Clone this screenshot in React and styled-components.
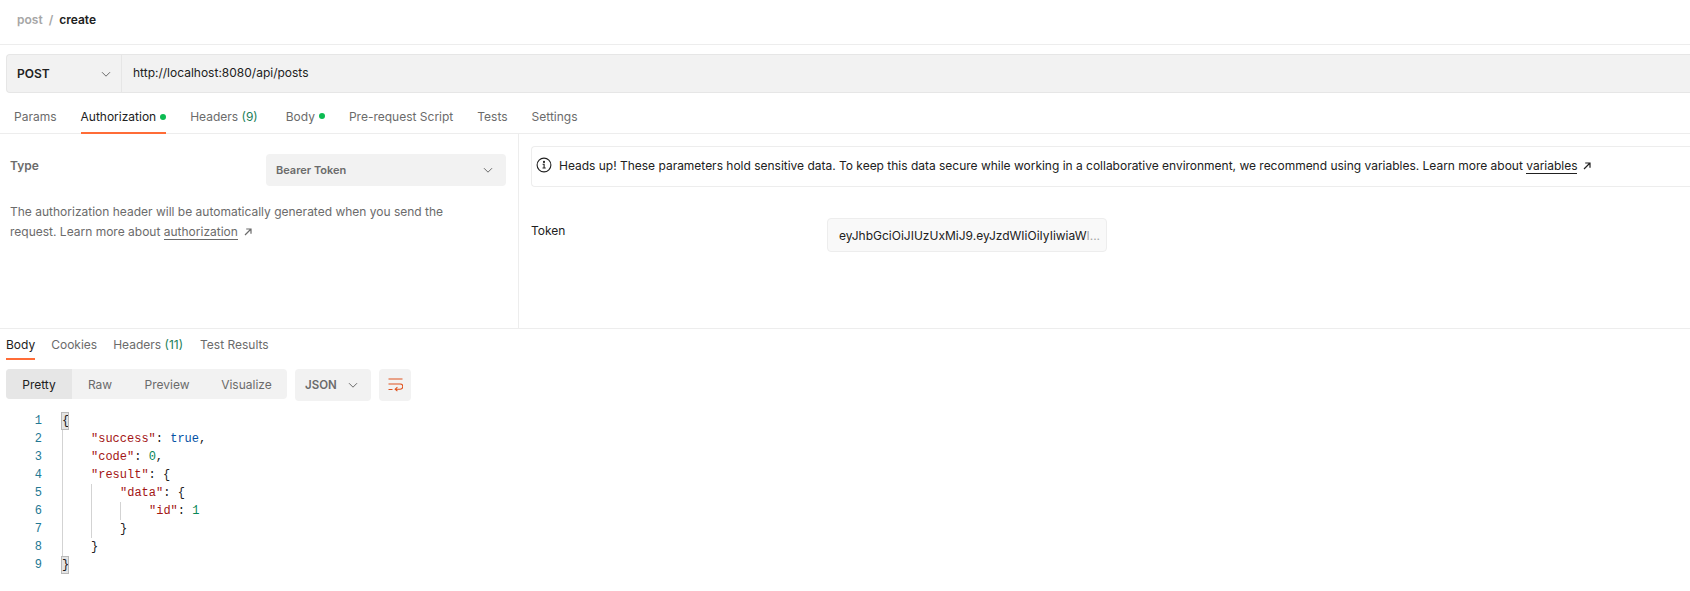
import React from 'react';
import styled, { createGlobalStyle } from 'styled-components';

const Global = createGlobalStyle`
  html, body { margin: 0; padding: 0; background: #fff; overflow: hidden; }
  body { font-family: Inter, "Noto Sans", sans-serif; font-size: 12px; color: #212121; }
`;

const Page = styled.div`
  width: 1690px;
  height: 591px;
  display: flex;
  flex-direction: column;
  overflow: hidden;
`;

const Breadcrumb = styled.header`
  height: 45px;
  box-sizing: border-box;
  border-bottom: 1px solid #ededed;
  display: flex;
  align-items: flex-start;
  padding: 13px 0 0 17px;
  gap: 6px;
  font-size: 12px;
  font-weight: 600;
  line-height: 14px;
`;
const Crumb = styled.span`
  color: ${p => (p.$muted ? '#a6a6a6' : '#212121')};
`;

const UrlBar = styled.div`
  margin: 9px 0 0 6px;
  height: 39px;
  box-sizing: border-box;
  display: flex;
  background: #f2f2f2;
  border: 1px solid #e6e6e6;
  border-right: 0;
  border-radius: 4px 0 0 4px;
`;
const Method = styled.div`
  width: 115px;
  box-sizing: border-box;
  border-right: 1px solid #e6e6e6;
  display: flex;
  align-items: center;
  justify-content: space-between;
  padding: 0 9px 0 10px;
  font-size: 12px;
  font-weight: 600;
`;
const UrlText = styled.div`
  padding: 0 0 2px 11px;
  display: flex;
  align-items: center;
  font-size: 12px;
  color: #212121;
`;

const Tabs = styled.nav`
  display: flex;
  align-items: stretch;
  gap: ${p => p.$gap || 24}px;
  height: ${p => p.$height || 41}px;
  box-sizing: border-box;
  padding-left: ${p => p.$pad || 14}px;
  border-bottom: ${p => (p.$line ? '1px solid #ededed' : '0')};
`;
const Tab = styled.div`
  display: flex;
  align-items: center;
  gap: 4px;
  box-sizing: border-box;
  font-size: 12px;
  white-space: nowrap;
  color: ${p => (p.$active ? '#212121' : '#6b6b6b')};
  border-bottom: 2px solid ${p => (p.$active ? '#ff6c37' : 'transparent')};
  margin-bottom: ${p => (p.$flush ? '-1px' : '0')};
  margin-right: ${p => p.$after || 0}px;
  padding-top: ${p => p.$top || 0}px;
`;
const Dot = styled.i`
  width: 6px;
  height: 6px;
  border-radius: 50%;
  background: #0cbb52;
`;
const Count = styled.span`
  color: #1c7f5a;
`;

const AuthPane = styled.section`
  height: 195px;
  box-sizing: border-box;
  display: flex;
  border-bottom: 1px solid #ededed;
`;
const LeftPane = styled.div`
  width: 519px;
  box-sizing: border-box;
  border-right: 1px solid #ededed;
  padding: 0 12px 0 10px;
`;
const TypeRow = styled.div`
  display: flex;
  justify-content: space-between;
  align-items: flex-start;
  margin-top: 20px;
`;
const TypeLabel = styled.div`
  font-size: 12px;
  font-weight: 600;
  color: #6b6b6b;
  padding-top: 4px;
`;
const Select = styled.div`
  width: 240px;
  height: 32px;
  box-sizing: border-box;
  background: #f2f2f2;
  border-radius: 4px;
  display: flex;
  align-items: center;
  justify-content: space-between;
  padding: 0 12px 0 10px;
  font-size: 11px;
  font-weight: 600;
  color: #6b6b6b;
`;
const Help = styled.p`
  margin: 16px 0 0;
  font-size: 12px;
  line-height: 20px;
  color: #6b6b6b;
`;
const LinkText = styled.span`
  color: ${p => (p.$dark ? '#212121' : '#6b6b6b')};
  border-bottom: 1px solid currentColor;
`;
const Arrow = styled.svg`
  width: 10px;
  height: 10px;
  margin-left: 5px;
  vertical-align: -1px;
`;

const RightPane = styled.div`
  flex: 1;
  padding: 12px 0 0 12px;
`;
const Notice = styled.div`
  height: 41px;
  box-sizing: border-box;
  border: 1px solid #ededed;
  border-right: 0;
  border-radius: 4px 0 0 4px;
  display: flex;
  align-items: center;
  gap: 7px;
  padding: 0 0 3px 4px;
  font-size: 12px;
  letter-spacing: -0.012px;
  white-space: nowrap;
  color: #212121;
`;
const TokenRow = styled.div`
  display: flex;
  align-items: flex-start;
  margin-top: 31px;
`;
const TokenLabel = styled.div`
  width: 296px;
  font-size: 12px;
  color: #212121;
  padding-top: 5px;
`;
const TokenInput = styled.div`
  width: 280px;
  height: 34px;
  box-sizing: border-box;
  background: #f9f9f9;
  border: 1px solid #ededed;
  border-radius: 4px;
  display: flex;
  align-items: center;
  padding: 0 11px;
  font-size: 12px;
  color: #212121;
  white-space: nowrap;
`;
const Fade = styled.span`
  color: #a6a6a6;
`;

const Toolbar = styled.div`
  display: flex;
  align-items: flex-start;
  gap: 8px;
  margin: 9px 0 0 6px;
`;
const Segmented = styled.div`
  display: flex;
  height: 30px;
  background: #f2f2f2;
  border-radius: 4px;
  overflow: hidden;
`;
const Segment = styled.div`
  width: ${p => p.$w}px;
  display: flex;
  align-items: center;
  justify-content: center;
  font-size: 12px;
  color: ${p => (p.$active ? '#212121' : '#6b6b6b')};
  background: ${p => (p.$active ? '#e6e6e6' : 'transparent')};
`;
const LangButton = styled.div`
  width: 76px;
  height: 32px;
  box-sizing: border-box;
  background: #f2f2f2;
  border-radius: 4px;
  display: flex;
  align-items: center;
  justify-content: space-between;
  padding: 0 12px 0 10px;
  font-size: 11.5px;
  font-weight: 600;
  color: #6b6b6b;
`;
const WrapButton = styled.div`
  width: 32px;
  height: 32px;
  background: #f2f2f2;
  border-radius: 4px;
  display: flex;
  align-items: center;
  justify-content: center;
`;

const Code = styled.div`
  margin-top: 11px;
  font-family: "Liberation Mono", "DejaVu Sans Mono", monospace;
  font-size: 12px;
`;
const Line = styled.div`
  display: flex;
  height: 18px;
  line-height: 18px;
  white-space: pre;
`;
const LineNo = styled.span`
  width: 42px;
  text-align: right;
  color: #237893;
  margin-right: 20px;
  flex: none;
`;
const Guide = styled.span`
  flex: none;
  width: 29px;
  box-sizing: border-box;
  border-left: 1px solid #d3d3d3;
`;
const Brace = styled.span`
  color: #1a1a1a;
  outline: 1px solid #b9b9b9;
  outline-offset: -1px;
  background: #e4e4e4;
  width: 7.2px;
  display: inline-block;
  margin-left: -1px;
  padding-left: 1px;
`;
const Key = styled.span` color: #a31515; `;
const Bool = styled.span` color: #0451a5; `;
const Num = styled.span` color: #098658; `;
const Plain = styled.span` color: #212121; `;

const Chevron = ({ size = 12, color = '#6b6b6b' }) => (
  <svg width={size} height={size} viewBox="0 0 12 12" fill="none" stroke={color} strokeWidth="1">
    <path d="M2 4.2 6 8.2 10 4.2" />
  </svg>
);

const ExternalArrow = ({ color }) => (
  <Arrow viewBox="0 0 10 10" fill="none" stroke={color} strokeWidth="1.2">
    <path d="M2 8 8 2M3.2 2H8V6.8" />
  </Arrow>
);

const InfoIcon = () => (
  <svg width="16" height="16" viewBox="0 0 16 16" fill="none" stroke="#212121" strokeWidth="1.1">
    <circle cx="8" cy="8" r="6.9" />
    <path d="M6.6 7.3H8.1V11M6.5 11H9.7" />
    <circle cx="8" cy="4.9" r=".5" fill="#212121" />
  </svg>
);

const WrapIcon = () => (
  <svg width="15" height="14" viewBox="0 0 15 14" fill="none" stroke="#e0531f" strokeWidth="1.1">
    <path d="M0.5 1H14.5M0.5 6H12.2a2.3 2.3 0 0 1 0 5.2H7.5M9.4 9.1 7.2 11.2 9.4 13.1M0.5 11.5H4.5" />
  </svg>
);

export default function App() {
  return (
    <Page>
      <Global />
      <Breadcrumb>
        <Crumb $muted>post</Crumb>
        <Crumb $muted>/</Crumb>
        <Crumb>create</Crumb>
      </Breadcrumb>
      <UrlBar>
        <Method>POST<Chevron /></Method>
        <UrlText>http://localhost:8080/api/posts</UrlText>
      </UrlBar>
      <Tabs $line $pad={14} $gap={24}>
        <Tab $top={8}>Params</Tab>
        <Tab $top={8} $active $flush>Authorization<Dot /></Tab>
        <Tab $top={8} $after={4}><span>Headers <Count>(9)</Count></span></Tab>
        <Tab $top={8}>Body<Dot /></Tab>
        <Tab $top={8}>Pre-request Script</Tab>
        <Tab $top={8}>Tests</Tab>
        <Tab $top={8}>Settings</Tab>
      </Tabs>
      <AuthPane>
        <LeftPane>
          <TypeRow>
            <TypeLabel>Type</TypeLabel>
            <Select>Bearer Token<Chevron /></Select>
          </TypeRow>
          <Help>
            The authorization header will be automatically generated when you send the<br />
            request. Learn more about <LinkText>authorization</LinkText>
            <ExternalArrow color="#6b6b6b" />
          </Help>
        </LeftPane>
        <RightPane>
          <Notice>
            <InfoIcon />
            <span>
              Heads up! These parameters hold sensitive data. To keep this data secure while working in a collaborative environment, we recommend using variables. Learn more about <LinkText $dark>variables</LinkText>
              <ExternalArrow color="#212121" />
            </span>
          </Notice>
          <TokenRow>
            <TokenLabel>Token</TokenLabel>
            <TokenInput><span>eyJhbGciOiJIUzUxMiJ9.eyJzdWIiOiIyIiwiaW<Fade>I...</Fade></span></TokenInput>
          </TokenRow>
        </RightPane>
      </AuthPane>
      <Tabs $pad={6} $gap={16} $height={31}>
        <Tab $top={1} $active>Body</Tab>
        <Tab $top={1}>Cookies</Tab>
        <Tab $top={1} $after={1}><span>Headers <Count>(11)</Count></span></Tab>
        <Tab $top={1}>Test Results</Tab>
      </Tabs>
      <Toolbar>
        <Segmented>
          <Segment $w={66} $active>Pretty</Segment>
          <Segment $w={56}>Raw</Segment>
          <Segment $w={78}>Preview</Segment>
          <Segment $w={81}>Visualize</Segment>
        </Segmented>
        <LangButton>JSON<Chevron /></LangButton>
        <WrapButton><WrapIcon /></WrapButton>
      </Toolbar>
      <Code>
        <Line><LineNo>1</LineNo><Brace>{'{'}</Brace></Line>
        <Line><LineNo>2</LineNo><Guide /><Key>"success"</Key><Plain>: </Plain><Bool>true</Bool><Plain>,</Plain></Line>
        <Line><LineNo>3</LineNo><Guide /><Key>"code"</Key><Plain>: </Plain><Num>0</Num><Plain>,</Plain></Line>
        <Line><LineNo>4</LineNo><Guide /><Key>"result"</Key><Plain>: {'{'}</Plain></Line>
        <Line><LineNo>5</LineNo><Guide /><Guide /><Key>"data"</Key><Plain>: {'{'}</Plain></Line>
        <Line><LineNo>6</LineNo><Guide /><Guide /><Guide /><Key>"id"</Key><Plain>: </Plain><Num>1</Num></Line>
        <Line><LineNo>7</LineNo><Guide /><Guide /><Plain>{'}'}</Plain></Line>
        <Line><LineNo>8</LineNo><Guide /><Plain>{'}'}</Plain></Line>
        <Line><LineNo>9</LineNo><Brace>{'}'}</Brace></Line>
      </Code>
    </Page>
  );
}
